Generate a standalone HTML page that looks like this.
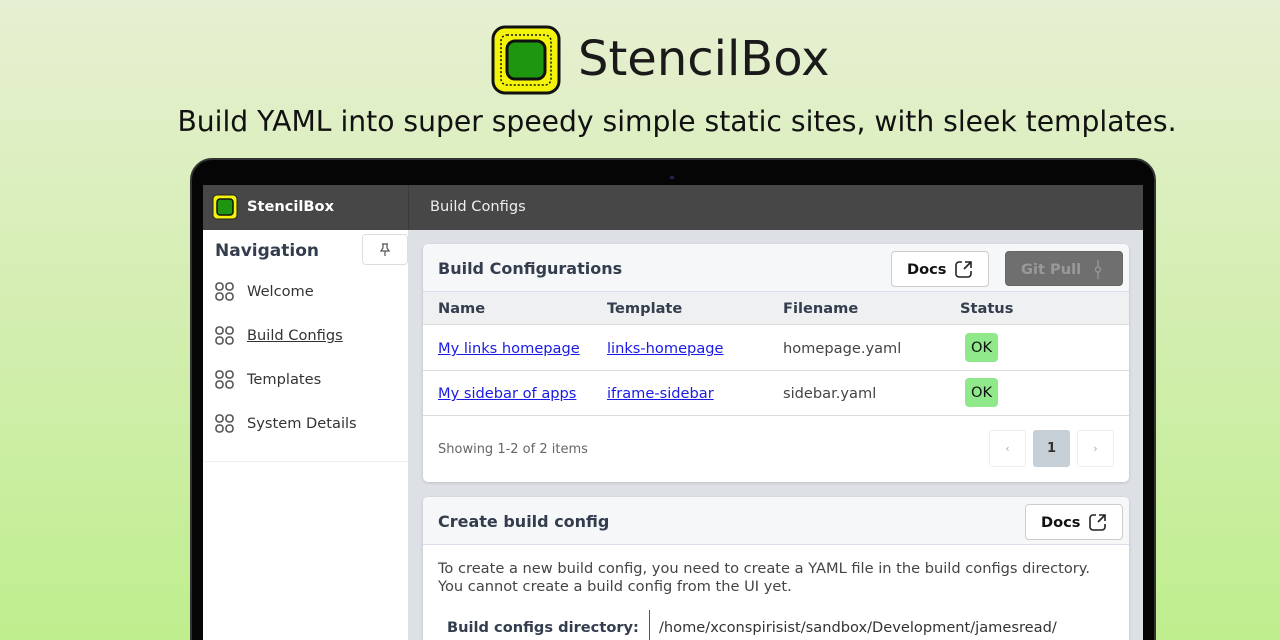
<!DOCTYPE html>
<html><head><meta charset="utf-8"><style>
*{box-sizing:border-box;margin:0;padding:0}
html,body{width:1280px;height:640px;overflow:hidden}
body{position:relative;font-family:"DejaVu Sans","Liberation Sans",sans-serif;background:linear-gradient(#e7efd2,#bfee8e)}
.a{position:absolute}
.title{left:578px;top:31px;font-size:48px;color:#1a1a1a}
.sub{left:0;width:1354px;text-align:center;top:105px;font-size:28.2px;color:#111}
.frame{left:190px;top:158px;width:966px;height:490px;background:#050505;border-radius:22px 22px 0 0;border:2px solid #333}
.screen{left:203px;top:185px;width:940px;height:455px;background:#dde1e5;overflow:hidden}
.hdr{left:0;top:0;width:940px;height:45px;background:#474747}
.side{left:0;top:45px;width:205px;height:420px;background:#fff}
.nav{font-size:14.6px;color:#333;left:44px}
.ic{left:12px;width:19px;height:19px}
.card{background:#fff;border-radius:5px;box-shadow:0 1px 3px rgba(0,0,0,.15);overflow:hidden}
.ch{background:#f6f7f9;border-bottom:1px solid #dde;height:48px}
.h{font-weight:bold;color:#333d4d;font-size:16px}
.btn{border:1px solid #ccc;border-radius:4px;background:#fff;font-weight:bold;font-size:14.6px;color:#111}
.th{font-weight:bold;font-size:14.6px;color:#333d4d}
a{color:#1a1ae6}
.td{font-size:14.6px}
.ok{background:#8fe88a;border-radius:4px;width:33px;height:29px;font-size:14.6px;text-align:center;line-height:29px;color:#111}
.ext{position:absolute;top:8px}
</style></head><body>
<svg class="a" style="left:491px;top:25px" width="70" height="70" viewBox="0 0 70 70"><rect x="2" y="2" width="66" height="66" rx="12" fill="#f4f40a" stroke="#111" stroke-width="3"/><rect x="10" y="10" width="50" height="50" rx="6" fill="none" stroke="#111" stroke-width="1.5" stroke-dasharray="2 2"/><rect x="16" y="16" width="38" height="38" rx="8" fill="#1f9610" stroke="#111" stroke-width="3"/></svg>
<div class="a title">StencilBox</div>
<div class="a sub">Build YAML into super speedy simple static sites, with sleek templates.</div>
<div class="a frame"></div>
<div class="a" style="left:670px;top:176px;width:4px;height:3px;background:#224"></div>
<div class="a screen">
 <div class="a hdr">
  <svg class="a" style="left:9px;top:9px" width="26" height="26" viewBox="0 0 26 26"><rect x="1" y="1" width="24" height="24" rx="4" fill="#f4f40a" stroke="#222" stroke-width="1"/><rect x="5" y="5" width="16" height="16" rx="3" fill="#1f9610" stroke="#111" stroke-width="1.5"/></svg>
  <div class="a" style="left:44px;top:13px;color:#fff;font-weight:bold;font-size:14.6px">StencilBox</div>
  <div class="a" style="left:205px;top:0;width:1px;height:45px;background:#3a3a3a"></div>
  <div class="a" style="left:227px;top:13px;color:#eee;font-size:14.6px">Build Configs</div>
 </div>
 <div class="a side">
  <div class="a h" style="left:12px;top:11px;font-size:17px">Navigation</div>
  <div class="a" style="left:159px;top:4px;width:46px;height:31px;border:1px solid #ddd;border-radius:4px"><svg class="a" style="left:17px;top:8px" width="10" height="14" viewBox="0 0 10 14" fill="none" stroke="#555" stroke-width="1.2"><path d="M2 1h6M3 1v4L1 8h8L7 5V1M5 8v5"/></svg></div>
  <svg class="a ic" style="top:52px" viewBox="0 0 19 19" fill="none" stroke="#555" stroke-width="1.6"><rect x="1" y="1" width="7" height="7" rx="3"/><rect x="11" y="1" width="7" height="7" rx="3"/><rect x="1" y="11" width="7" height="7" rx="3"/><rect x="11" y="11" width="7" height="7" rx="3"/></svg>
  <div class="a nav" style="top:53px">Welcome</div>
  <svg class="a ic" style="top:96px" viewBox="0 0 19 19" fill="none" stroke="#555" stroke-width="1.6"><rect x="1" y="1" width="7" height="7" rx="3"/><rect x="11" y="1" width="7" height="7" rx="3"/><rect x="1" y="11" width="7" height="7" rx="3"/><rect x="11" y="11" width="7" height="7" rx="3"/></svg>
  <div class="a nav" style="top:97px;text-decoration:underline">Build Configs</div>
  <svg class="a ic" style="top:140px" viewBox="0 0 19 19" fill="none" stroke="#555" stroke-width="1.6"><rect x="1" y="1" width="7" height="7" rx="3"/><rect x="11" y="1" width="7" height="7" rx="3"/><rect x="1" y="11" width="7" height="7" rx="3"/><rect x="11" y="11" width="7" height="7" rx="3"/></svg>
  <div class="a nav" style="top:141px">Templates</div>
  <svg class="a ic" style="top:184px" viewBox="0 0 19 19" fill="none" stroke="#555" stroke-width="1.6"><rect x="1" y="1" width="7" height="7" rx="3"/><rect x="11" y="1" width="7" height="7" rx="3"/><rect x="1" y="11" width="7" height="7" rx="3"/><rect x="11" y="11" width="7" height="7" rx="3"/></svg>
  <div class="a nav" style="top:185px">System Details</div>
  <div class="a" style="left:0;top:231px;width:205px;height:1px;background:#eee"></div>
 </div>
 <div class="a card" style="left:220px;top:59px;width:706px;height:238px">
  <div class="a ch" style="left:0;top:0;width:706px"></div>
  <div class="a h" style="left:15px;top:15px">Build Configurations</div>
  <div class="a btn" style="left:468px;top:7px;width:98px;height:36px;padding:9px 0 0 15px">Docs<svg class="ext" style="left:62px" width="19" height="19" viewBox="0 0 19 19" fill="none" stroke="#222" stroke-width="1.6"><path d="M8 2H5a3 3 0 0 0-3 3v9a3 3 0 0 0 3 3h9a3 3 0 0 0 3-3v-3M11 2h6v6M17 2l-7 7"/></svg></div>
  <div class="a btn" style="left:582px;top:7px;width:118px;height:35px;background:#6f6f6f;border-color:#666;color:#999;padding:9px 0 0 15px">Git Pull<svg class="ext" style="left:88px" width="8" height="19" viewBox="0 0 8 19" fill="none" stroke="#999" stroke-width="1.3"><path d="M4 0v7M4 12v7"/><circle cx="4" cy="9.5" r="2.5"/></svg></div>
  <div class="a" style="left:0;top:48px;width:706px;height:33px;background:#eff0f2;border-bottom:1px solid #ddd"></div>
  <div class="a th" style="left:15px;top:56px">Name</div>
  <div class="a th" style="left:184px;top:56px">Template</div>
  <div class="a th" style="left:360px;top:56px">Filename</div>
  <div class="a th" style="left:537px;top:56px">Status</div>
  <div class="a td" style="left:15px;top:96px"><a href="#">My links homepage</a></div>
  <div class="a td" style="left:184px;top:96px"><a href="#">links-homepage</a></div>
  <div class="a td" style="left:360px;top:96px;color:#444">homepage.yaml</div>
  <div class="a ok" style="left:542px;top:89px">OK</div>
  <div class="a" style="left:0;top:126px;width:706px;height:1px;background:#ddd"></div>
  <div class="a td" style="left:15px;top:141px"><a href="#">My sidebar of apps</a></div>
  <div class="a td" style="left:184px;top:141px"><a href="#">iframe-sidebar</a></div>
  <div class="a td" style="left:360px;top:141px;color:#444">sidebar.yaml</div>
  <div class="a ok" style="left:542px;top:134px">OK</div>
  <div class="a" style="left:0;top:171px;width:706px;height:1px;background:#ddd"></div>
  <div class="a" style="left:15px;top:198px;font-size:13px;color:#666">Showing 1-2 of 2 items</div>
  <div class="a" style="left:566px;top:186px;width:37px;height:37px;border:1px solid #eee;border-radius:3px;text-align:center;line-height:35px;color:#aaa;font-size:11px">‹</div>
  <div class="a" style="left:610px;top:186px;width:37px;height:37px;background:#c6ced6;border-radius:3px;text-align:center;line-height:37px;font-weight:bold;font-size:13px;color:#333">1</div>
  <div class="a" style="left:654px;top:186px;width:37px;height:37px;border:1px solid #eee;border-radius:3px;text-align:center;line-height:35px;color:#aaa;font-size:11px">›</div>
 </div>
 <div class="a card" style="left:220px;top:312px;width:706px;height:200px">
  <div class="a ch" style="left:0;top:0;width:706px"></div>
  <div class="a h" style="left:15px;top:15px">Create build config</div>
  <div class="a btn" style="left:602px;top:7px;width:98px;height:36px;padding:9px 0 0 15px">Docs<svg class="ext" style="left:62px" width="19" height="19" viewBox="0 0 19 19" fill="none" stroke="#222" stroke-width="1.6"><path d="M8 2H5a3 3 0 0 0-3 3v9a3 3 0 0 0 3 3h9a3 3 0 0 0 3-3v-3M11 2h6v6M17 2l-7 7"/></svg></div>
  <div class="a" style="left:15px;top:63px;font-size:14.6px;color:#444;line-height:18px">To create a new build config, you need to create a YAML file in the build configs directory.<br>You cannot create a build config from the UI yet.</div>
  <div class="a h" style="left:24px;top:122px;font-size:14.6px">Build configs directory:</div>
  <div class="a" style="left:226px;top:113px;width:1px;height:40px;background:#555"></div>
  <div class="a" style="left:236px;top:122px;font-size:14.6px;color:#333">/home/xconspirisist/sandbox/Development/jamesread/</div>
 </div>
</div>
</body></html>
